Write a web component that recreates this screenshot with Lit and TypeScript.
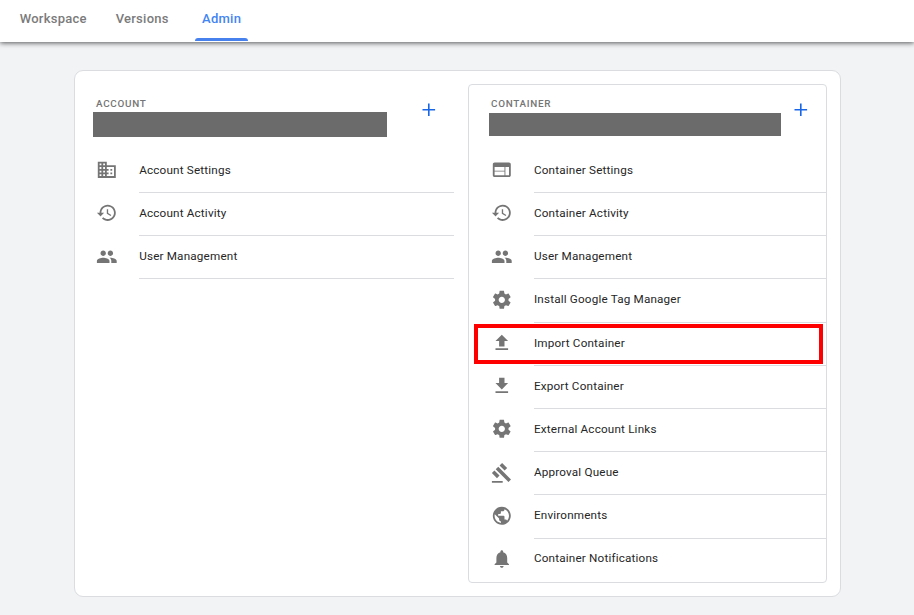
import { LitElement, html, css } from "lit";
import { customElement, property } from "lit/decorators.js";

const ICONS: Record<string, string> = {
  domain:
    "M12 7V3H2v18h20V7H12zM6 19H4v-2h2v2zm0-4H4v-2h2v2zm0-4H4V9h2v2zm0-4H4V5h2v2zm4 12H8v-2h2v2zm0-4H8v-2h2v2zm0-4H8V9h2v2zm0-4H8V5h2v2zm10 12h-8v-2h2v-2h-2v-2h2v-2h-2V9h8v10zm-2-8h-2v2h2v-2zm0 4h-2v2h2v-2z",
  history:
    "M13 3c-4.97 0-9 4.03-9 9H1l3.89 3.89.07.14L9 12H6c0-3.87 3.13-7 7-7s7 3.13 7 7-3.13 7-7 7c-1.93 0-3.68-.79-4.94-2.06l-1.42 1.42C8.27 19.99 10.51 21 13 21c4.97 0 9-4.03 9-9s-4.03-9-9-9zm-1 5v5l4.28 2.54.72-1.21-3.5-2.08V8H12z",
  people:
    "M16 11c1.66 0 2.99-1.34 2.99-3S17.66 5 16 5c-1.66 0-3 1.34-3 3s1.34 3 3 3zm-8 0c1.66 0 2.99-1.34 2.99-3S9.66 5 8 5C6.34 5 5 6.34 5 8s1.34 3 3 3zm0 2c-2.33 0-7 1.17-7 3.5V19h14v-2.5c0-2.33-4.67-3.5-7-3.5zm8 0c-.29 0-.62.02-.97.05 1.16.84 1.97 1.97 1.97 3.45V19h6v-2.5c0-2.33-4.67-3.5-7-3.5z",
  web: "M20 4H4c-1.1 0-1.99.9-1.99 2L2 18c0 1.1.9 2 2 2h16c1.1 0 2-.9 2-2V6c0-1.1-.9-2-2-2zm-5 14H4v-4h11v4zm0-5H4V9h11v4zm5 5h-4V9h4v9z",
  settings:
    "M19.43 12.98c.04-.32.07-.64.07-.98s-.03-.66-.07-.98l2.11-1.65c.19-.15.24-.42.12-.64l-2-3.46c-.12-.22-.39-.3-.61-.22l-2.49 1c-.52-.4-1.08-.73-1.69-.98l-.38-2.65C14.46 2.18 14.25 2 14 2h-4c-.25 0-.46.18-.49.42l-.38 2.65c-.61.25-1.17.59-1.69.98l-2.49-1c-.23-.09-.49 0-.61.22l-2 3.46c-.13.22-.07.49.12.64l2.11 1.65c-.04.32-.07.65-.07.98s.03.66.07.98l-2.11 1.65c-.19.15-.24.42-.12.64l2 3.46c.12.22.39.3.61.22l2.49-1c.52.4 1.08.73 1.69.98l.38 2.65c.03.24.24.42.49.42h4c.25 0 .46-.18.49-.42l.38-2.65c.61-.25 1.17-.59 1.69-.98l2.49 1c.23.09.49 0 .61-.22l2-3.46c.12-.22.07-.49-.12-.64l-2.11-1.65zM12 15.5c-1.93 0-3.5-1.57-3.5-3.5s1.57-3.5 3.5-3.5 3.5 1.57 3.5 3.5-1.57 3.5-3.5 3.5z",
  upload: "M9 16h6v-6h4l-7-7-7 7h4zm-4 2h14v2H5z",
  download: "M19 9h-4V3H9v6H5l7 7 7-7zM5 18v2h14v-2H5z",
  gavel:
    "M1 21h12v2H1zM5.245 8.07l2.83-2.827 14.14 14.142-2.828 2.828zM12.317 1l5.657 5.656-2.83 2.83-5.654-5.66zM3.825 9.485l5.657 5.657-2.828 2.828-5.657-5.657z",
  globe:
    "M12 2C6.48 2 2 6.48 2 12s4.48 10 10 10 10-4.48 10-10S17.52 2 12 2zm-1 17.93c-3.95-.49-7-3.85-7-7.93 0-.62.08-1.21.21-1.79L9 15v1c0 1.1.9 2 2 2v1.93zm6.9-2.54c-.26-.81-1-1.39-1.9-1.39h-1v-3c0-.55-.45-1-1-1H8v-2h2c.55 0 1-.45 1-1V7h2c1.1 0 2-.9 2-2v-.41c2.93 1.19 5 4.06 5 7.41 0 2.08-.8 3.97-2.1 5.39z",
  bell: "M12 22c1.1 0 2-.9 2-2h-4c0 1.1.89 2 2 2zm6-6v-5c0-3.07-1.64-5.64-4.5-6.32V4c0-.83-.67-1.5-1.5-1.5s-1.5.67-1.5 1.5v.68C7.63 5.36 6 7.92 6 11v5l-2 2v1h16v-1l-2-2z",
  add: "M19 12.9h-6.1V19h-1.8v-6.1H5v-1.8h6.1V5h1.8v6.1H19z",
};

interface Item {
  icon: string;
  label: string;
  marked?: boolean;
}

const ACCOUNT: Item[] = [
  { icon: "domain", label: "Account Settings" },
  { icon: "history", label: "Account Activity" },
  { icon: "people", label: "User Management" },
];

const CONTAINER: Item[] = [
  { icon: "web", label: "Container Settings" },
  { icon: "history", label: "Container Activity" },
  { icon: "people", label: "User Management" },
  { icon: "settings", label: "Install Google Tag Manager" },
  { icon: "upload", label: "Import Container", marked: true },
  { icon: "download", label: "Export Container" },
  { icon: "settings", label: "External Account Links" },
  { icon: "gavel", label: "Approval Queue" },
  { icon: "globe", label: "Environments" },
  { icon: "bell", label: "Container Notifications" },
];

@customElement("md-icon")
export class MdIcon extends LitElement {
  @property() name = "";

  static styles = css`
    :host {
      display: block;
      flex: none;
      width: 21.6px;
      height: 21.6px;
    }
    svg {
      display: block;
      width: 100%;
      height: 100%;
      fill: currentColor;
    }
  `;

  render() {
    return html`<svg viewBox="0 0 24 24"><path d=${ICONS[this.name]}></path></svg>`;
  }
}

@customElement("admin-panel")
export class AdminPanel extends LitElement {
  @property() heading = "";
  @property({ attribute: false }) items: Item[] = [];

  static styles = css`
    :host {
      display: block;
      box-sizing: border-box;
    }
    .head {
      display: flex;
      align-items: flex-start;
      justify-content: space-between;
      height: 64.9px;
      box-sizing: border-box;
      padding: 12px 14px 0 20px;
    }
    :host(.account) .head {
      padding: 12px 14px 0 17px;
    }
    .title {
      height: 16px;
      padding-left: 2px;
      font-size: 9.9px;
      font-weight: 500;
      line-height: 13px;
      letter-spacing: 0.72px;
      color: #757575;
    }
    :host(.account) .title {
      height: 15px;
      padding-left: 3px;
    }
    .redacted {
      width: 292px;
      height: 23px;
      background: #6b6b6b;
    }
    :host(.account) .redacted {
      width: 294px;
      height: 25px;
    }
    .add {
      margin-top: 2.2px;
      color: #1a66e8;
    }
    .row {
      position: relative;
      display: flex;
      height: 43.2px;
      padding-left: 22.2px;
    }
    :host(.account) .row {
      padding-left: 20.4px;
    }
    .row md-icon {
      margin-top: 9.4px;
      margin-right: 21.2px;
      color: #757575;
    }
    .label {
      flex: 1;
      box-sizing: border-box;
      border-bottom: 1px solid #dadce0;
      font-size: 11.7px;
      line-height: 40.6px;
      letter-spacing: 0.18px;
      color: #262626;
    }
    .row:last-child .label {
      line-height: 40px;
    }
    :host(.container) .row:last-child .label {
      border-bottom: 0;
      line-height: 39px;
    }
    .marker {
      position: absolute;
      left: 5px;
      right: 3px;
      top: 1.5px;
      height: 32px;
      border: 4px solid #ff0000;
    }
  `;

  render() {
    return html`
      <div class="head">
        <div>
          <div class="title">${this.heading}</div>
          <div class="redacted"></div>
        </div>
        <md-icon class="add" name="add"></md-icon>
      </div>
      <div>
        ${this.items.map(
          (item) => html`<div class="row">
            <md-icon name=${item.icon}></md-icon>
            <div class="label">${item.label}</div>
            ${item.marked ? html`<div class="marker"></div>` : ""}
          </div>`
        )}
      </div>
    `;
  }
}

@customElement("app-root")
export class AppRoot extends LitElement {
  static styles = css`
    :host {
      display: block;
      box-sizing: border-box;
      height: 615px;
      overflow: hidden;
      background: #f1f3f4;
      font-family: Roboto, "Liberation Sans", sans-serif;
    }
    .tabs {
      display: flex;
      box-sizing: border-box;
      height: 42px;
      padding-left: 12.7px;
      gap: 15px;
      background: #fff;
      box-shadow: 0 1px 5px rgba(0, 0, 0, 0.65);
    }
    .tab {
      display: flex;
      flex-direction: column;
      justify-content: space-between;
      padding: 0 7px;
      font-size: 13px;
      font-weight: 500;
      line-height: 37px;
      letter-spacing: 0.25px;
      color: #7b7b7b;
      height: 41px;
    }
    .active {
      margin-left: 4.4px;
      color: #4285f4;
    }
    .bar {
      height: 3px;
      margin: 0 -7px;
      border-radius: 3px 3px 0 0;
      background: #4681ee;
    }
    .card {
      display: flex;
      align-items: flex-start;
      box-sizing: border-box;
      width: 767px;
      height: 527px;
      margin: 28px 0 0 74px;
      padding: 13px;
      border: 1px solid #dadce0;
      border-radius: 9px;
      background: #fff;
    }
    .account {
      width: 378px;
      margin: 1px 16px 0 -12px;
    }
    .container {
      width: 359px;
      height: 499px;
      margin-left: -2px;
      border: 1px solid #dadce0;
      border-radius: 4px;
    }
  `;

  render() {
    return html`
      <nav class="tabs">
        <div class="tab">Workspace</div>
        <div class="tab">Versions</div>
        <div class="tab active">Admin<span class="bar"></span></div>
      </nav>
      <main class="card">
        <admin-panel class="account" heading="ACCOUNT" .items=${ACCOUNT}></admin-panel>
        <admin-panel class="container" heading="CONTAINER" .items=${CONTAINER}></admin-panel>
      </main>
    `;
  }
}
